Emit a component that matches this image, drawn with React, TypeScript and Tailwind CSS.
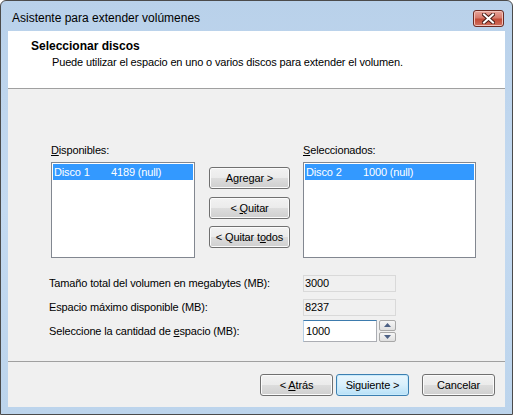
const font = "font-['Segoe_UI','Liberation_Sans',Arial,sans-serif]";

function Btn({ children, w, def }: { children: React.ReactNode; w: string; def?: boolean }) {
  return (
    <div
      className={`${w} h-[22px] flex items-center justify-center rounded-[3px] border text-black ${
        def
          ? "border-[#3c7fb1] bg-gradient-to-b from-[#eaf6fd] via-[#d9f0fc] to-[#b7e0f7] shadow-[inset_0_0_0_1px_#c8eafb]"
          : "border-[#707070] bg-[linear-gradient(#f2f2f2,#ebebeb_50%,#dddddd_50%,#cfcfcf)] shadow-[inset_0_0_0_1px_#fbfbfb]"
      }`}
    >
      <span className="whitespace-pre">{children}</span>
    </div>
  );
}

function ListBox({ w, name, size }: { w: string; name: string; size: string }) {
  return (
    <div className={`${w} h-[96px] border border-[#828790] bg-white p-px`}>
      <div className="h-[16px] flex items-center bg-[#3399ff] text-white pl-px leading-none">
        <span className="w-[57px]">{name}</span>
        <span>{size}</span>
      </div>
    </div>
  );
}

function ReadBox({ value }: { value: string }) {
  return (
    <div className="w-[93px] h-[17px] border border-[#d9d9d9] bg-[#f0f0f0] flex items-center pl-[1px] leading-none">
      {value}
    </div>
  );
}

export default function App() {
  return (
    <div className={`w-[513px] h-[415px] bg-white ${font} text-[11px] tracking-[-0.15px] text-black`}>
      <div className="w-full h-full flex flex-col border border-[#4b4b4b] rounded-t-[6px] bg-gradient-to-b from-[#b9d1ea] via-[#c4daf1] to-[#bcd4ec] px-[7px] pb-[7px] overflow-hidden">
        {/* title bar */}
        <div className="h-[30px] flex items-center justify-between pl-[4px] pr-[1px] shrink-0">
          <span className="text-[12px] tracking-normal text-black pt-[4px]">Asistente para extender volúmenes</span>
          <div className="w-[31px] h-[17px] mt-[5px] rounded-[3px] border border-[#6b2a22] bg-[linear-gradient(#e8a59b,#d67a6c_45%,#c24a36_55%,#d0715f)] flex items-center justify-center shadow-[inset_0_0_0_1px_#f1c1b9]">
            <svg width="13" height="11" viewBox="0 0 13 11">
              <path d="M2 1.5 L11 9.5 M11 1.5 L2 9.5" stroke="#4b1e18" strokeWidth="4" strokeLinecap="square" />
              <path d="M2 1.5 L11 9.5 M11 1.5 L2 9.5" stroke="#ffffff" strokeWidth="2" strokeLinecap="square" />
            </svg>
          </div>
        </div>

        {/* content */}
        <div className="flex-1 flex flex-col bg-[#f0f0f0]">
          <div className="h-[58px] bg-white border-b border-[#a0a0a0] pl-[23px] pt-[8px] shrink-0">
            <div className="font-bold text-[12px] tracking-normal leading-[15px]">Seleccionar discos</div>
            <div className="pl-[21px] leading-[15px] mt-[1px]">
              Puede utilizar el espacio en uno o varios discos para extender el volumen.
            </div>
          </div>

          <div className="flex-1 flex flex-col pt-[54px] pl-[43px]">
            <div className="flex items-start">
              <div className="flex flex-col">
                <div className="leading-[15px] mb-[4px]">
                  <u>D</u>isponibles:
                </div>
                <ListBox w="w-[144px]" name="Disco 1" size="4189 (null)" />
              </div>
              <div className="flex flex-col ml-[14px] mt-[24px]">
                <Btn w="w-[81px]">Agregar &gt;</Btn>
                <div className="h-[8px]" />
                <Btn w="w-[81px]">
                  {"< "}<u>Q</u>uitar
                </Btn>
                <div className="h-[7px]" />
                <Btn w="w-[81px]">
                  {"< Quitar t"}<u>o</u>dos
                </Btn>
              </div>
              <div className="flex flex-col ml-[13px]">
                <div className="leading-[15px] mb-[4px]">
                  <u>S</u>eleccionados:
                </div>
                <ListBox w="w-[173px]" name="Disco 2" size="1000 (null)" />
              </div>
            </div>

            <div className="flex flex-col mt-[15px] -ml-[2px]">
              <div className="flex items-center h-[20px]">
                <span className="w-[254px]">Tamaño total del volumen en megabytes (MB):</span>
                <ReadBox value="3000" />
              </div>
              <div className="flex items-center h-[20px] mt-[4px]">
                <span className="w-[254px]">Espacio máximo disponible (MB):</span>
                <ReadBox value="8237" />
              </div>
              <div className="flex items-center h-[22px] mt-[3px]">
                <span className="w-[254px]">
                  Seleccione la cantidad de <u>e</u>spacio (MB):
                </span>
                <div className="flex items-center">
                  <div className="w-[74px] h-[22px] border border-[#abadb3] border-t-[#3d7bad] border-l-[#b5cfe7] bg-white flex items-center pl-[2px] leading-none">
                    1000
                  </div>
                  <div className="ml-[2px] w-[17px] h-[22px] flex flex-col gap-[1px]">
                    <div className="flex-1 flex items-center justify-center border border-[#a8a8a8] rounded-[2px] bg-gradient-to-b from-[#f6f6f6] to-[#e0e0e0]">
                      <svg width="7" height="4" viewBox="0 0 7 4">
                        <path d="M0 4 L3.5 0 L7 4 Z" fill="#4d6185" />
                      </svg>
                    </div>
                    <div className="flex-1 flex items-center justify-center border border-[#a8a8a8] rounded-[2px] bg-gradient-to-b from-[#f6f6f6] to-[#e0e0e0]">
                      <svg width="7" height="4" viewBox="0 0 7 4">
                        <path d="M0 0 L3.5 4 L7 0 Z" fill="#4d6185" />
                      </svg>
                    </div>
                  </div>
                </div>
              </div>
            </div>
          </div>

          <div className="border-t border-[#a0a0a0] h-[46px] flex items-center justify-end pr-[10px] pt-[1px] shrink-0">
            <Btn w="w-[73px]">
              {"< "}<u>A</u>trás
            </Btn>
            <div className="w-[3px]" />
            <Btn w="w-[73px]" def>
              Siguiente &gt;
            </Btn>
            <div className="w-[13px]" />
            <Btn w="w-[73px]">Cancelar</Btn>
          </div>
        </div>
      </div>
    </div>
  );
}
